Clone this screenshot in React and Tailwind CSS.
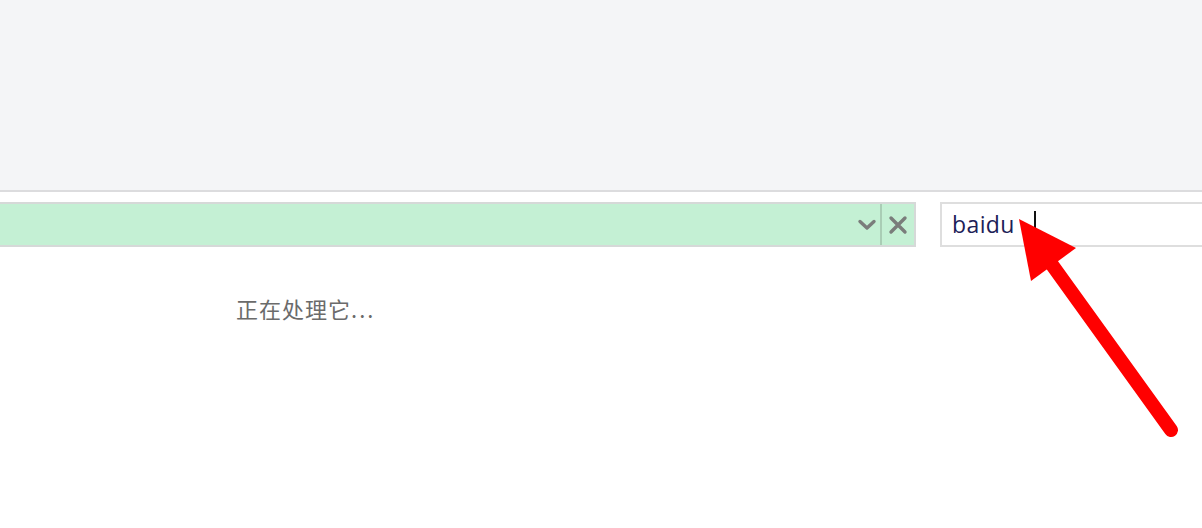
import React from 'react';

const Chevron = () => (
    <svg width="20" height="12" viewBox="0 0 20 12" fill="none">
        <path d="M3 2.5 L10 9 L17 2.5" stroke="#7a7d7b" strokeWidth="3.4" strokeLinecap="round" strokeLinejoin="round" />
    </svg>
);

const Cross = () => (
    <svg width="20" height="20" viewBox="0 0 20 20" fill="none">
        <path d="M3 3 L17 17 M17 3 L3 17" stroke="#7a7d7b" strokeWidth="3.4" strokeLinecap="round" />
    </svg>
);

const App = () => {
    return (
        <div className="relative w-[1202px] h-[528px] overflow-hidden bg-white" style={{ fontFamily: '"Noto Sans", "Noto Sans CJK SC", sans-serif' }}>
            {/* Top toolbar area */}
            <div className="h-[192px] bg-[#f4f5f7] border-b-2 border-[#dcdcde]" />

            {/* Address bar row */}
            <div className="flex items-center mt-[10px] h-[45px]">
                <div className="flex items-stretch w-[916px] h-full bg-[#c4f0d4] border-y-2 border-r-2 border-[#d6d9d8]">
                    <div className="flex-1" />
                    <div className="flex items-center justify-center w-[29px] border-r-2 border-[#a9cdb5]">
                        <Chevron />
                    </div>
                    <div className="flex items-center justify-center w-[32px]">
                        <Cross />
                    </div>
                </div>
                <div className="ml-[24px] flex-1 h-full flex items-center border-2 border-r-0 border-[#dedede] bg-white pl-[10px]">
                    <span className="text-[23px] leading-none text-[#1c2157] font-medium tracking-[0.4px]" style={{ fontFamily: '"Open Sans", sans-serif' }}>baidu</span>
                    <span className="ml-[19px] -mt-[8px] w-[2px] h-[19px] bg-[#111]" />
                </div>
            </div>

            {/* Status */}
            <div className="pl-[236px] pt-[45px] text-[22px] tracking-[1px] text-[#6b6b6b]" style={{ fontFamily: '"Noto Sans CJK SC", sans-serif' }}>
                正在处理它<span className="tracking-[2px]">...</span>
            </div>

            {/* Red annotation arrow */}
            <svg className="absolute left-0 top-0 pointer-events-none" width="1202" height="528" viewBox="0 0 1202 528">
                <line x1="1171" y1="430" x2="1050" y2="262" stroke="#ff0000" strokeWidth="14" strokeLinecap="round" />
                <polygon points="1019,219 1076,248 1031,281" fill="#ff0000" />
            </svg>
        </div>
    );
};

export default App;
